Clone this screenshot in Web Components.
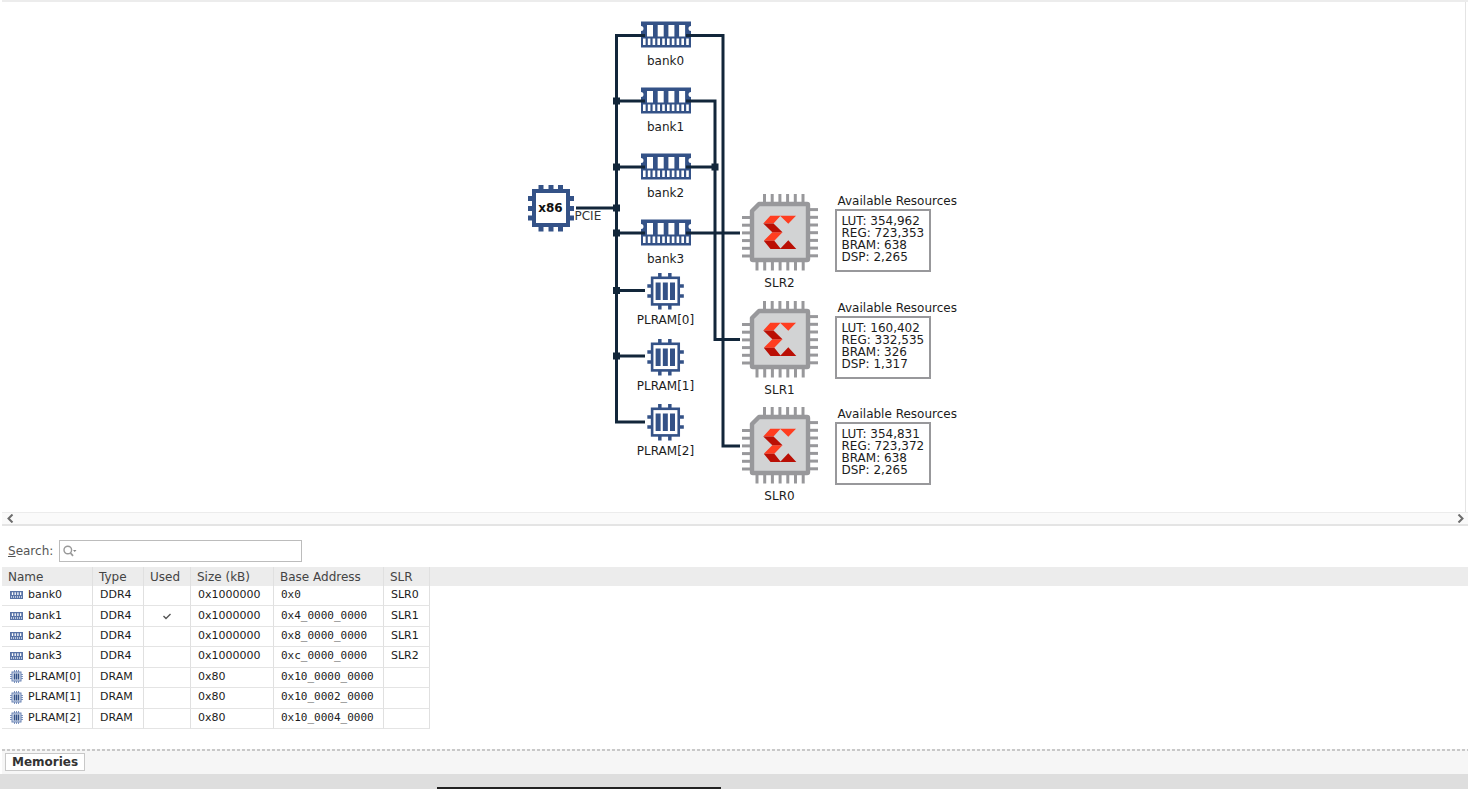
<!DOCTYPE html>
<html lang="en">
<head>
<meta charset="utf-8">
<title>Memories</title>
<style>
html, body { margin: 0; height: 100%; background: #fff; }
body { font: 12px/14px "DejaVu Sans", sans-serif; color: #1c1c1c; }
</style>
</head>
<body>
<platform-view></platform-view>
<script>
const define = (name, html, init) => customElements.define(name, class extends HTMLElement {
  connectedCallback() {
    if (this.shadowRoot) return;
    const root = this.attachShadow({ mode: 'open' });
    const t = document.createElement('template');
    t.innerHTML = typeof html === 'function' ? html(this) : html;
    root.append(t.content.cloneNode(true));
    if (init) init(root, this);
  }
});

const range = (n, f) => Array.from({ length: n }, (_, i) => f(i)).join('');

const dimm = `<svg width="52" height="28" viewBox="0 0 52 28" aria-hidden="true">
  <path fill="#345287" d="M1 .5H51V5A2.5 2.5 0 0 0 51 10V26.5H1V10A2.5 2.5 0 0 0 1 5Z"/>
  <g fill="#fff">${range(4, i => `<rect x="${7 + i * 10.7}" y="4" width="6" height="11.5"/>`)}
  ${range(10, i => `<rect x="${3 + i * 4.8}" y="17.5" width="2.6" height="6.5"/>`)}</g></svg>`;

const plram = `<svg width="38" height="38" viewBox="0 0 38 38" aria-hidden="true">
  <path d="M13.5 1V6M23.5 1V6M13.5 32V37.5M23.5 32V37.5M1 14H6M1 24H6M32 14H37.5M32 24H37.5" stroke="#345287" stroke-width="3.5"/>
  <rect x="5.8" y="5.8" width="26.6" height="26.6" fill="#fff" stroke="#345287" stroke-width="2.6"/>
  <path d="M11.8 10.5V28M19 10.5V28M26.2 10.5V28" stroke="#345287" stroke-width="5"/></svg>`;

const fpga = `<svg width="76" height="77" viewBox="0 0 76 77" aria-hidden="true">
  <g stroke="#98989b" stroke-width="3">
  ${range(6, i => `<path d="M${22.5 + i * 7.7} 0V10"/>`)}
  ${range(7, i => `<path d="M${15 + i * 7.7} 66V76.5"/>`)}
  ${range(6, i => `<path d="M0 ${23.5 + i * 7.7}H10"/>`)}
  ${range(7, i => `<path d="M66 ${15.6 + i * 7.7}H76"/>`)}</g>
  <path d="M10 17 17 10H65Q66 10 66 11V65Q66 66 65 66H11Q10 66 10 65Z" fill="#d2d3d4" stroke="#98989b" stroke-width="4.4" stroke-linejoin="round"/>
  <path fill="#ff3d20" d="M28.3 21.7H54L46.3 29.8 38.3 22 31.5 29.5H21.3ZM30.3 38.3H40.5L32.3 46.8H21.8Z"/>
  <path fill="#ba0f05" d="M21.3 29.5H31.5L40.5 38.3H30.3ZM21.8 46.8H32.3L38.5 54.5 46.3 46.3 54.3 55H28.5Z"/></svg>`;

const cpu = `<svg width="48" height="48" viewBox="0 0 48 48" aria-hidden="true">
  <path d="M14 1V7M24 1V7M33.5 1V7M14 41V47.5M24 41V47.5M33.5 41V47.5M1 14.5H7M1 24.5H7M1 34H7M41 14.5H47M41 24.5H47M41 34H47" stroke="#345287" stroke-width="5"/>
  <rect x="7" y="7" width="34" height="34" fill="#fff" stroke="#345287" stroke-width="4"/></svg>`;

define('memory-node', el => `<style>
  :host { position: absolute; left: 156px; transform: translateX(-50%); display: flex; flex-direction: column; align-items: center; gap: 5px; white-space: nowrap; }
  :host([kind=plram]) { gap: 3px; }
  svg { display: block; }
  </style>${el.getAttribute('kind') === 'plram' ? plram : dimm}<slot></slot>`);

define('host-node', `<style>
  :host { position: absolute; display: grid; place-items: center; font-weight: bold; color: #111; }
  svg, b { grid-area: 1 / 1; }
  svg { display: block; }
  </style>${cpu}<b><slot></slot></b>`);

define('slr-node', `<style>
  :host { position: absolute; display: flex; flex-direction: column; align-items: center; gap: 5px; }
  svg { display: block; }
  </style>${fpga}<slot></slot>`);

define('resource-card', el => {
  const [lut, reg, bram, dsp] = el.getAttribute('values').split(' ');
  return `<style>
  :host { position: absolute; display: block; white-space: nowrap; line-height: 12px; }
  h3 { margin: 0 0 1px 3px; font: inherit; line-height: 14px; }
  ul { box-sizing: border-box; margin: 0; padding: 4px 5px 6px; width: 96px; height: 63px; list-style: none; border: 2px solid #98989b; }
  </style><h3>Available Resources</h3>
  <ul><li>LUT: ${lut}</li><li>REG: ${reg}</li><li>BRAM: ${bram}</li><li>DSP: ${dsp}</li></ul>`;
});

define('platform-diagram', `<style>
  :host { display: flex; justify-content: center; border-right: 1px solid #e4e4e4; margin-right: 2px; background: #fff; overflow: hidden; }
  .stage { position: relative; flex: none; width: 448px; height: 510px; }
  .wires { position: absolute; inset: 0; }
  .pcie { position: absolute; left: 65px; top: 207px; color: #333; }
  </style>
  <div class="stage">
    <host-node style="left:17px;top:182px">x86</host-node>
    <span class="pcie">PCIE</span>
    ${[0, 1, 2, 3].map(i => `<memory-node style="top:${[19, 85, 151, 217][i]}px">bank${i}</memory-node>`).join('')}
    ${[0, 1, 2].map(i => `<memory-node kind="plram" style="top:${[270, 336, 401][i]}px">PLRAM[${i}]</memory-node>`).join('')}
    ${[['SLR2', '354,962 723,353 638 2,265', 192], ['SLR1', '160,402 332,535 326 1,317', 299], ['SLR0', '354,831 723,372 638 2,265', 405]]
      .map(([n, v, y]) => `<slr-node style="left:232px;top:${y}px">${n}</slr-node><resource-card values="${v}" style="left:325px;top:${y}px"></resource-card>`).join('')}
    <svg class="wires" width="448" height="510" viewBox="510 2 448 510" aria-hidden="true">
      <g fill="none" stroke="#12263a" stroke-width="3">
        <path d="M645 35.5H616.5V422H645M576 208H616.5M616.5 101H645M616.5 167H645M616.5 233H645M616.5 290.5H645M616.5 356H645"/>
        <path d="M686 35.5H723V446H740M686 101H715V339.5H740M686 167H715M686 233H740"/>
      </g>
      <g fill="#12263a">${[101, 167, 208, 233, 290.5, 356].map(y => `<rect x="613" y="${y - 3.5}" width="7" height="7"/>`).join('')}<rect x="711.5" y="163.5" width="7" height="7"/></g>
    </svg>
  </div>`);

define('scroll-strip', `<style>
  :host { display: flex; justify-content: space-between; height: 14px; box-sizing: border-box; border-top: 1px solid #ececec; border-bottom: 2px solid #e4e4e4; background: #fafafa; }
  button { display: grid; place-items: center; width: 16px; padding: 0; border: 0; background: none; }
  svg { display: block; }
  path { fill: none; stroke: #6c6c6c; stroke-width: 2; }
  </style>
  <button aria-label="Scroll left"><svg width="7" height="9" viewBox="0 0 7 9"><path d="M5.5 .5 1.5 4.5 5.5 8.5"/></svg></button>
  <button aria-label="Scroll right"><svg width="7" height="9" viewBox="0 0 7 9"><path d="M1.5 .5 5.5 4.5 1.5 8.5"/></svg></button>`);

define('search-field', `<style>
  :host { display: flex; align-items: center; gap: 6px; padding: 14px 6px 5px; color: #555; }
  .box { display: flex; align-items: center; box-sizing: border-box; width: 243px; height: 22px; border: 1px solid #bcbcbc; background: #fff; }
  svg { display: block; margin-left: 3px; }
  input { flex: 1; min-width: 0; border: 0; outline: 0; padding: 0 4px; background: none; font: inherit; }
  </style>
  <label for="q"><u>S</u>earch:</label>
  <div class="box"><svg width="14" height="12" viewBox="0 0 14 12" fill="none" stroke="#999" aria-hidden="true"><circle cx="4.8" cy="5" r="3.8" stroke-width="1.4"/><path d="M7.5 8 10 10.8" stroke-width="1.8"/><path d="M10 5H13.5L11.7 7Z" fill="#888" stroke="none"/></svg><input id="q" type="text"></div>`);

define('memory-glyph', el => `<style>:host { display: block; width: 13px; } svg { display: block; }</style>` +
  (el.getAttribute('kind') === 'DDR4'
    ? `<svg width="13" height="8" viewBox="0 0 13 8"><path fill="#5873a6" d="M0 0H13V8H0Z"/><path d="M2.5 1.3V4M5.2 1.3V4M7.9 1.3V4M10.6 1.3V4" stroke="#fff" stroke-width="1.3"/><path d="M1 6H12.5" stroke="#dce3f0" stroke-width="1.6" stroke-dasharray="1 1"/></svg>`
    : `<svg width="13" height="13" viewBox="0 0 13 13"><path d="M4.5 0V13M8.5 0V13M0 4.5H13M0 8.5H13M6.5 0V13M0 6.5H13" stroke="#7f95bf"/><rect x="2" y="2" width="9" height="9" fill="#d3dcec" stroke="#6b84b4"/><path d="M4.5 3.5V9.5M6.5 3.5V9.5M8.5 3.5V9.5" stroke="#345287" stroke-width="1.4"/></svg>`));

define('memory-table', () => {
  const rows = [
    ['bank0', 'DDR4', 0, '0x1000000', '0x0', 'SLR0'],
    ['bank1', 'DDR4', 1, '0x1000000', '0x4_0000_0000', 'SLR1'],
    ['bank2', 'DDR4', 0, '0x1000000', '0x8_0000_0000', 'SLR1'],
    ['bank3', 'DDR4', 0, '0x1000000', '0xc_0000_0000', 'SLR2'],
    ['PLRAM[0]', 'DRAM', 0, '0x80', '0x10_0000_0000', ''],
    ['PLRAM[1]', 'DRAM', 0, '0x80', '0x10_0002_0000', ''],
    ['PLRAM[2]', 'DRAM', 0, '0x80', '0x10_0004_0000', '']];
  const check = '<svg width="10" height="8" viewBox="0 0 10 8" role="img" aria-label="yes"><path d="M1.5 4 4 6.5 8.5 2" fill="none" stroke="#555" stroke-width="1.4"/></svg>';
  return `<style>
  :host { display: block; }
  table { width: 100%; height: 162px; table-layout: fixed; border-collapse: separate; border-spacing: 0; }
  th, td { box-sizing: border-box; padding: 0 0 1px 7px; border-right: 1px solid #e0e0e0; text-align: left; font-weight: normal; white-space: nowrap; line-height: 14px; }
  th { height: 19px; padding: 0 0 0 6px; background: #ececec; color: #444; }
  td { border-bottom: 1px solid #e4e4e4; font-size: 11px; }
  td:last-child, th:last-child { border: 0; }
  .name { display: flex; align-items: center; gap: 5px; }
  td:first-child { padding-left: 8px; }
  .used { text-align: center; padding: 0; }
  .used svg { display: block; margin: auto; }
  .addr { font: 11px/14px "DejaVu Sans Mono", monospace; }
  </style>
  <table>
    <colgroup><col style="width:91px"><col style="width:51px"><col style="width:47px"><col style="width:83px"><col style="width:110px"><col style="width:46px"><col></colgroup>
    <thead><tr><th>Name</th><th>Type</th><th>Used</th><th>Size (kB)</th><th>Base Address</th><th>SLR</th><th></th></tr></thead>
    <tbody>${rows.map(r => `<tr><td><span class="name"><memory-glyph kind="${r[1]}"></memory-glyph>${r[0]}</span></td><td>${r[1]}</td><td class="used">${r[2] ? check : ''}</td><td>${r[3]}</td><td class="addr">${r[4]}</td><td>${r[5]}</td><td></td></tr>`).join('')}</tbody>
  </table>`;
});

define('tab-strip', `<style>
  :host { display: block; }
  nav { display: flex; box-sizing: border-box; height: 25px; margin-left: 2px; padding: 2px 3px 3px; background: linear-gradient(90deg, #c8c8c8 60%, transparent 60%) 0 0 / 5px 2px repeat-x #f6f6f6; }
  button { height: 18px; margin-top: 2px; padding: 0 6px; border: 1px solid #c8c8c8; background: #fff; font: bold 12px/14px "DejaVu Sans", sans-serif; color: #333; }
  footer { display: flex; align-items: flex-end; height: 15px; padding-left: 437px; background: #dedede; }
  i { width: 284px; height: 2px; background: #222; }
  </style>
  <nav><button>Memories</button></nav><footer><i></i></footer>`);

define('platform-view', `<style>
  :host { display: flex; flex-direction: column; min-height: 100vh; }
  .edge { height: 2px; background: #ececec; }
  main { flex: 1; }
  .edge, platform-diagram, scroll-strip, main { margin-left: 2px; }
  </style>
  <div class="edge"></div>
  <platform-diagram></platform-diagram>
  <scroll-strip></scroll-strip>
  <main><search-field></search-field><memory-table></memory-table></main>
  <tab-strip></tab-strip>`);
</script>
</body>
</html>
